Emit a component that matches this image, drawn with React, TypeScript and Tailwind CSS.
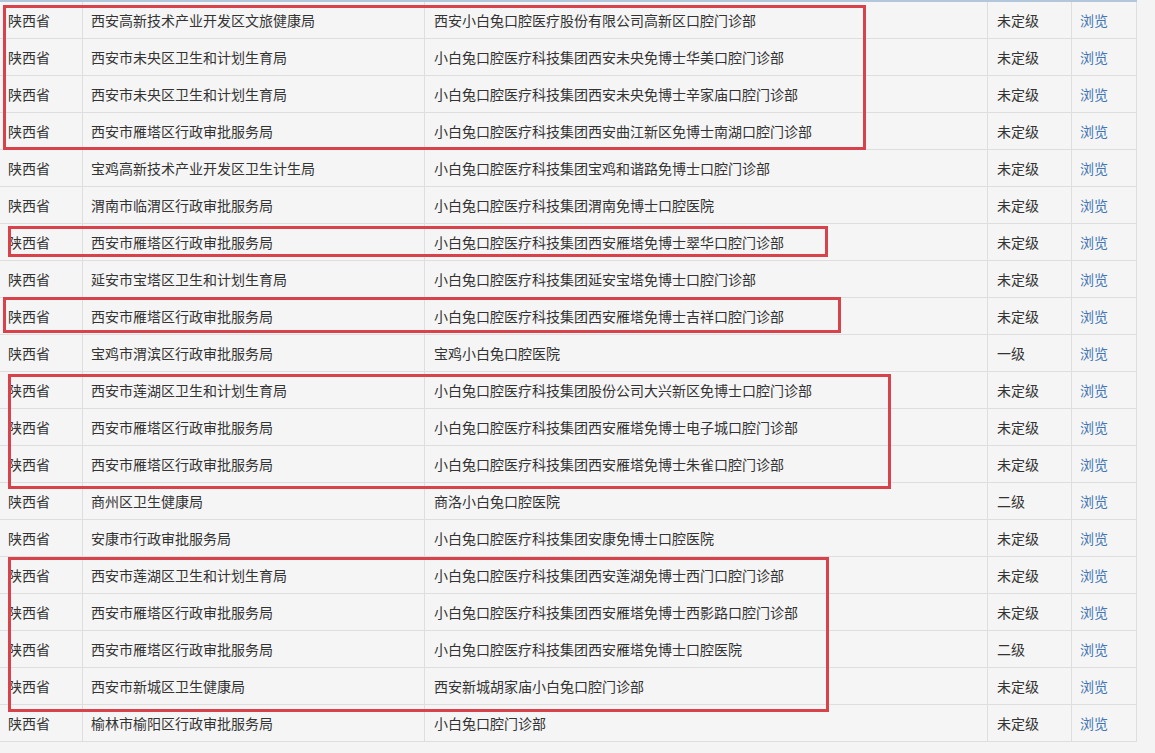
import React from "react";

const rows: [string, string, string, string][] = [
  ["陕西省", "西安高新技术产业开发区文旅健康局", "西安小白兔口腔医疗股份有限公司高新区口腔门诊部", "未定级"],
  ["陕西省", "西安市未央区卫生和计划生育局", "小白兔口腔医疗科技集团西安未央免博士华美口腔门诊部", "未定级"],
  ["陕西省", "西安市未央区卫生和计划生育局", "小白兔口腔医疗科技集团西安未央免博士辛家庙口腔门诊部", "未定级"],
  ["陕西省", "西安市雁塔区行政审批服务局", "小白兔口腔医疗科技集团西安曲江新区免博士南湖口腔门诊部", "未定级"],
  ["陕西省", "宝鸡高新技术产业开发区卫生计生局", "小白兔口腔医疗科技集团宝鸡和谐路免博士口腔门诊部", "未定级"],
  ["陕西省", "渭南市临渭区行政审批服务局", "小白兔口腔医疗科技集团渭南免博士口腔医院", "未定级"],
  ["陕西省", "西安市雁塔区行政审批服务局", "小白兔口腔医疗科技集团西安雁塔免博士翠华口腔门诊部", "未定级"],
  ["陕西省", "延安市宝塔区卫生和计划生育局", "小白兔口腔医疗科技集团延安宝塔免博士口腔门诊部", "未定级"],
  ["陕西省", "西安市雁塔区行政审批服务局", "小白兔口腔医疗科技集团西安雁塔免博士吉祥口腔门诊部", "未定级"],
  ["陕西省", "宝鸡市渭滨区行政审批服务局", "宝鸡小白兔口腔医院", "一级"],
  ["陕西省", "西安市莲湖区卫生和计划生育局", "小白兔口腔医疗科技集团股份公司大兴新区免博士口腔门诊部", "未定级"],
  ["陕西省", "西安市雁塔区行政审批服务局", "小白兔口腔医疗科技集团西安雁塔免博士电子城口腔门诊部", "未定级"],
  ["陕西省", "西安市雁塔区行政审批服务局", "小白兔口腔医疗科技集团西安雁塔免博士朱雀口腔门诊部", "未定级"],
  ["陕西省", "商州区卫生健康局", "商洛小白兔口腔医院", "二级"],
  ["陕西省", "安康市行政审批服务局", "小白兔口腔医疗科技集团安康免博士口腔医院", "未定级"],
  ["陕西省", "西安市莲湖区卫生和计划生育局", "小白兔口腔医疗科技集团西安莲湖免博士西门口腔门诊部", "未定级"],
  ["陕西省", "西安市雁塔区行政审批服务局", "小白兔口腔医疗科技集团西安雁塔免博士西影路口腔门诊部", "未定级"],
  ["陕西省", "西安市雁塔区行政审批服务局", "小白兔口腔医疗科技集团西安雁塔免博士口腔医院", "二级"],
  ["陕西省", "西安市新城区卫生健康局", "西安新城胡家庙小白兔口腔门诊部", "未定级"],
  ["陕西省", "榆林市榆阳区行政审批服务局", "小白兔口腔门诊部", "未定级"],
];

export default function App() {
  return (
    <div
      className="relative w-[1155px] h-[753px] overflow-hidden bg-[#f4f4f4] text-[14px] text-[#333]"
      style={{ fontFamily: '"Microsoft YaHei", "Noto Sans CJK SC", "Noto Sans", sans-serif' }}
    >
      <div className="w-[1137px] border-t-2 border-[#b3c7dc]">
        {rows.map((r, i) => (
          <div key={i} className="flex h-[37px] border-b border-[#dedede] bg-[#f5f5f5]">
            <div className="w-[83px] flex items-center pl-[8px] border-r border-[#dedede]">{r[0]}</div>
            <div className="w-[342px] flex items-center pl-[8px] border-r border-[#dedede]">{r[1]}</div>
            <div className="w-[563px] flex items-center pl-[9px] border-r border-[#dedede]">{r[2]}</div>
            <div className="w-[84px] flex items-center pl-[9px] border-r border-[#dedede]">{r[3]}</div>
            <div className="w-[65px] flex items-center pl-[8px] border-r border-[#dedede] text-[#4276b4]">浏览</div>
          </div>
        ))}
      </div>
      <div className="absolute left-[3px] top-[5px] w-[863px] h-[145px] border-[3px] border-[#d8434b]" />
      <div className="absolute left-[8px] top-[226px] w-[820px] h-[31px] border-[3px] border-[#d8434b]" />
      <div className="absolute left-[3px] top-[297px] w-[838px] h-[36px] border-[3px] border-[#d8434b]" />
      <div className="absolute left-[8px] top-[374px] w-[883px] h-[115px] border-[3px] border-[#d8434b]" />
      <div className="absolute left-[8px] top-[557px] w-[821px] h-[155px] border-[3px] border-[#d8434b]" />
    </div>
  );
}
